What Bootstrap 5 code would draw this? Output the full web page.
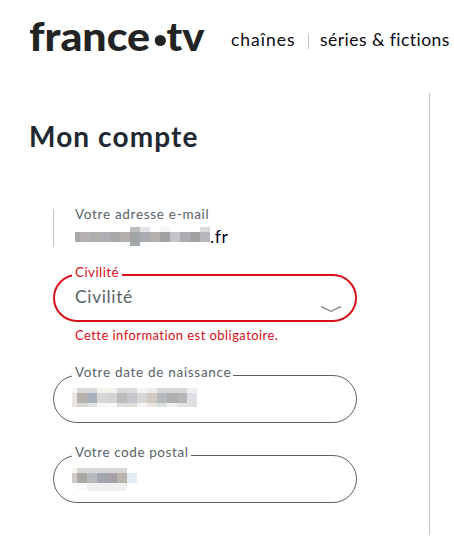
<!DOCTYPE html>
<html lang="fr">
<head>
<meta charset="utf-8">
<meta name="viewport" content="width=device-width, initial-scale=1">
<title>Mon compte</title>
<link href="https://cdn.jsdelivr.net/npm/bootstrap@5.3.0/dist/css/bootstrap.min.css" rel="stylesheet">
<style>
body{font-family:Lato,"Liberation Sans",sans-serif;color:#00001c;background:#fff}
.site-head{height:93px;padding:10px 0 0 30px}
.brand{width:177px;height:54px}
.brand text{font:900 39.5px Lato,sans-serif;fill:#232323}
.site-nav{margin:17px 0 0 24px;font-size:17.5px;line-height:25px}
.site-nav a{color:#0a0a14;text-decoration:none;white-space:nowrap}
.nav-one{letter-spacing:1px;width:66px}
.nav-two{letter-spacing:.46px}
.nav-rule{width:1px;height:15px;margin:7px 11px 0 11px;background:#c4c4c4}
.main-col{width:430px;height:442px;border-right:1px solid #c4c4c4;padding:27px 0 0 29px}
.page-title{font-size:28px;line-height:32px;font-weight:700;letter-spacing:1.1px;color:#1e2832;margin:0;white-space:nowrap}
.account-form{margin:57px 0 0 24px;width:304px}
.mail-info{height:38px;border-left:1px solid #c4c4c4;padding-left:21px}
.lbl{font-size:13.5px;line-height:16px;letter-spacing:.7px;color:#596269;white-space:nowrap}
.mail-info .lbl{margin-top:-3px}
.mail-line{height:22px;font-size:17.5px;line-height:22px;letter-spacing:.6px;margin-top:4px}
.mosaic{display:block;shape-rendering:crispEdges}
.mail-line .mosaic{margin-top:1px}
.pill{position:relative;height:48px;border:1px solid #596269;border-radius:24px;padding-left:21px}
.pill .mosaic{margin:12px 0 0 -3px}
.pill .lbl{position:absolute;top:-12px;left:18px;background:#fff;padding:0 2px 0 3px;margin:0}
.pill-error{border:2px solid #d8101a;margin-top:27px;padding-left:20px}
.pill-error .lbl{top:-12px;left:17px;color:#d8101a;letter-spacing:.4px;padding-right:3px}
.postal .lbl{letter-spacing:.58px}
.choice{font-size:17.5px;line-height:22px;letter-spacing:.62px;color:#596269;padding-top:10px}
.chevron{margin:29px 13px 0 auto;width:22px;height:8px}
.error-text{font-size:13px;line-height:16px;letter-spacing:.44px;color:#d8101a;margin:5px 0 0 22px;white-space:nowrap}
.birth,.postal{margin-top:32px}
</style>
</head>
<body>
<header class="site-head d-flex align-items-start">
  <svg class="brand flex-shrink-0" viewBox="0 0 177 54" role="img" aria-label="france.tv">
    <text x="-1" y="41" textLength="121" lengthAdjust="spacingAndGlyphs">france</text>
    <circle cx="130.3" cy="30.5" r="5.6" fill="#232323"/>
    <text x="136.5" y="41" textLength="38" lengthAdjust="spacingAndGlyphs">tv</text>
  </svg>
  <nav class="site-nav d-flex">
    <a href="#" class="nav-one">chaînes</a><span class="nav-rule"></span><a href="#" class="nav-two">séries &amp; fictions</a>
  </nav>
</header>
<main class="main-col">
  <h1 class="page-title">Mon compte</h1>
  <form class="account-form d-flex flex-column">
    <div class="mail-info">
      <div class="lbl">Votre adresse e-mail</div>
      <div class="mail-line d-flex">
        <svg class="mosaic" width="135" height="19" aria-hidden="true">
          <path fill="#bebdbb" d="M55 0h10v5h-10z"/><path fill="#e1e5e9" d="M65 0h10v5h-10z"/><path fill="#f4f6f6" d="M85 0h10v5h-10z"/><path fill="#d9d9dc" d="M125 0h10v5h-10z"/>
          <path fill="#aaa9a9" d="M0 5h5v10h-5z"/><path fill="#b4b1b0" d="M5 5h10v10h-10z"/><path fill="#aeaeac" d="M15 5h10v10h-10z"/><path fill="#adafb5" d="M25 5h10v10h-10z"/><path fill="#a9a9aa" d="M35 5h10v10h-10z"/><path fill="#b5afac" d="M45 5h10v10h-10z"/><path fill="#a2a5a6" d="M55 5h10v10h-10z"/><path fill="#a8abb0" d="M65 5h10v10h-10z"/><path fill="#b4b1ae" d="M75 5h10v10h-10z"/><path fill="#a0a3a2" d="M85 5h10v10h-10z"/><path fill="#c4c5c8" d="M95 5h10v10h-10z"/><path fill="#abadb1" d="M105 5h10v10h-10z"/><path fill="#a0a3a1" d="M115 5h10v10h-10z"/><path fill="#b7b6ba" d="M125 5h10v10h-10z"/>
          <path fill="#fafafa" d="M45 15h10v4h-10z"/><path fill="#a4a9ad" d="M55 15h10v4h-10z"/>
        </svg>
        <span>.fr</span>
      </div>
    </div>
    <div class="pill pill-error d-flex">
      <label class="lbl">Civilité</label>
      <div class="choice">Civilité</div>
      <svg class="chevron" viewBox="0 0 22 8" aria-hidden="true"><path d="M1 1.5 L11 6.3 L21 1.5" fill="none" stroke="#8c8c8c" stroke-width="1.4"/></svg>
    </div>
    <div class="error-text">Cette information est obligatoire.</div>
    <div class="pill birth">
      <label class="lbl">Votre date de naissance</label>
      <svg class="mosaic" width="125" height="19" aria-hidden="true">
        <path fill="#fbf6f0" d="M0 0h5v5h-5z"/><path fill="#d8d9db" d="M5 0h20v5h-20z"/><path fill="#f5f2ee" d="M25 0h20v5h-20z"/><path fill="#d9dad9" d="M45 0h10v5h-10z"/><path fill="#dadce0" d="M55 0h10v5h-10z"/><path fill="#f4f4f4" d="M65 0h10v5h-10z"/><path fill="#f2ede8" d="M75 0h10v5h-10z"/><path fill="#d7d7d7" d="M85 0h30v5h-30z"/><path fill="#eeeef3" d="M115 0h10v5h-10z"/>
        <path fill="#ece5e1" d="M0 5h5v14h-5z"/><path fill="#b6b1aa" d="M5 5h10v10h-10z"/><path fill="#a7b0ba" d="M15 5h10v10h-10z"/><path fill="#d8d8d8" d="M25 5h10v10h-10z"/><path fill="#d3d3d3" d="M35 5h10v10h-10z"/><path fill="#bebcba" d="M45 5h10v10h-10z"/><path fill="#c7c8cd" d="M55 5h10v10h-10z"/><path fill="#d7d7d7" d="M65 5h10v10h-10z"/><path fill="#d2c9c1" d="M75 5h10v10h-10z"/><path fill="#b5babd" d="M85 5h10v10h-10z"/><path fill="#adafae" d="M95 5h10v10h-10z"/><path fill="#b4b5b6" d="M105 5h10v10h-10z"/><path fill="#dfe0e4" d="M115 5h10v14h-10z"/>
        <path fill="#d9d7d6" d="M5 15h10v4h-10z"/><path fill="#e1e2e4" d="M15 15h10v4h-10z"/><path fill="#f5f5f5" d="M25 15h10v4h-10z"/><path fill="#faf9f7" d="M35 15h10v4h-10z"/><path fill="#dededd" d="M45 15h20v4h-20z"/><path fill="#f6f6f6" d="M65 15h10v4h-10z"/><path fill="#e7e5e4" d="M75 15h10v4h-10z"/><path fill="#dbddde" d="M85 15h10v4h-10z"/><path fill="#f1f1f1" d="M95 15h10v4h-10z"/><path fill="#e7e2df" d="M105 15h10v4h-10z"/>
      </svg>
    </div>
    <div class="pill postal">
      <label class="lbl">Votre code postal</label>
      <svg class="mosaic" width="65" height="23" aria-hidden="true">
        <path fill="#f8f5ef" d="M0 0h5v5h-5z"/><path fill="#d8d8d8" d="M5 0h50v5h-50z"/>
        <path fill="#cfcccb" d="M0 5h5v10h-5z"/><path fill="#aba7a1" d="M5 5h10v10h-10z"/><path fill="#b5bbbd" d="M15 5h10v10h-10z"/><path fill="#a2a6ae" d="M25 5h10v10h-10z"/><path fill="#a5a3a9" d="M35 5h10v10h-10z"/><path fill="#bbb4ad" d="M45 5h10v10h-10z"/><path fill="#e3ecf4" d="M55 5h10v10h-10z"/>
        <path fill="#fafafa" d="M5 15h10v8h-10z"/><path fill="#f0f0f0" d="M15 15h40v8h-40z"/>
      </svg>
    </div>
  </form>
</main>
<script src="https://cdn.jsdelivr.net/npm/bootstrap@5.3.0/dist/js/bootstrap.bundle.min.js"></script>
</body>
</html>
